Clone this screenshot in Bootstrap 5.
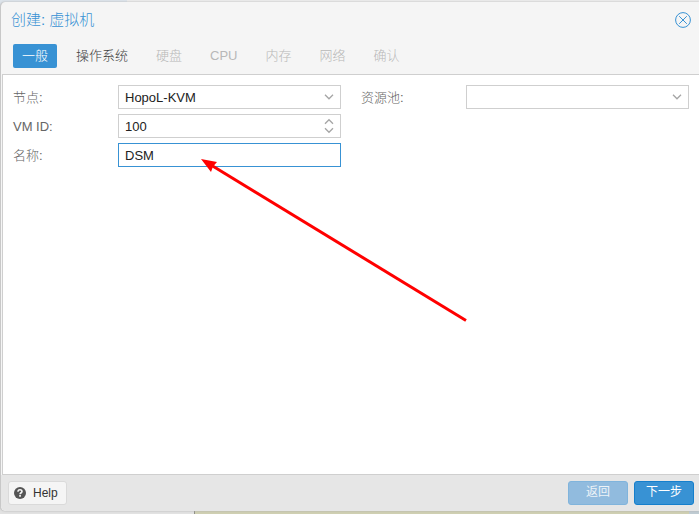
<!DOCTYPE html>
<html lang="zh-CN">
<head>
<meta charset="utf-8">
<meta name="viewport" content="width=device-width, initial-scale=1">
<title>创建: 虚拟机</title>
<link rel="stylesheet" href="https://cdn.jsdelivr.net/npm/bootstrap@5.3.0/dist/css/bootstrap.min.css">
<style>
  body {
    font: 300 13px/17px "Liberation Sans", "Noto Sans CJK SC", sans-serif;
    color: #404040;
    background:
      linear-gradient(90deg, #dde4eb 127px, #ececec 127px) top / 100% 8px no-repeat,
      linear-gradient(90deg, #e2e2e2 194px, #8f8f88 194px 195px, #cfcfb2 195px calc(100% - 10px), #bfcbd2 calc(100% - 10px)) bottom / 100% 8px no-repeat,
      #d5d5d5;
  }
  .backdrop { padding: 2px 0 3px; }
  .wizard { background: #f5f5f5; border-left: 1px solid #c8c8c8; border-radius: 5px 0 0 5px; box-shadow: 0 0 2px #aaa; }
  .wizard-head { padding: 8px 8px 6px 10px; }
  .wizard-title { font-size: 15px; line-height: 20px; font-weight: 300; color: #3892d4; }
  .close-btn { width: 16px; height: 16px; color: #3892d4; }
  .close-btn svg { display: block; }
  .tab-row { gap: 10px; margin-top: 14px; padding-left: 2px; }
  .tab-btn { height: 24px; padding: 0 9px 2px; border-radius: 2px; color: #404040; font-weight: 300; }
  .tab-btn:disabled { color: #b8b8b8; }
  .tab-btn.active { background: #3892d4; color: #fff; }
  .wizard-body { margin-left: 1px; border: 1px solid #cfcfcf; border-right: 0; background: #fff; }
  .form-cols { padding: 10px; gap: 20px; }
  .form-cols > div { flex: 1 1 0; min-width: 0; }
  .field-row + .field-row { margin-top: 5px; }
  .field-row label { width: 105px; flex: none; color: #666; }
  .field-box { display: grid; flex: 1; min-width: 0; height: 24px; border: 1px solid #cfcfcf; background: #fff; }
  .field-box > * { grid-area: 1 / 1; }
  .field-box:focus-within, .field-box.focused { border-color: #3892d4; }
  .field-box select, .field-box input {
    width: 100%; min-width: 0; padding: 2px 26px 0 6px; border: 0; outline: 0; background: transparent;
    appearance: none; color: #222; font-weight: 400; line-height: 20px;
  }
  .field-box input[type=number] { appearance: textfield; }
  .field-box input::-webkit-inner-spin-button { display: none; }
  .field-box svg { place-self: center end; margin-right: 6px; pointer-events: none; }
  .pointer-arrow { left: 198px; top: 84px; pointer-events: none; }
  .wizard-foot { padding: 6px 5px 6px 7px; gap: 6px; background: #e6e6e6; border-radius: 0 0 0 5px; }
  .foot-btn { height: 24px; min-width: 60px; padding: 0 5px 2px; border: 1px solid #157fcc; border-radius: 3px; background: #3892d4; color: #fff; font-size: 12px; }
  .foot-btn:disabled { background: #91bbde; border-color: #80b4dc; color: #edf3f8; }
  .help-btn { min-width: 59px; padding-bottom: 0; gap: 7px; background: #f5f5f5; border-color: #dadada; color: #333; }
</style>
<script src="https://cdn.jsdelivr.net/npm/bootstrap@5.3.0/dist/js/bootstrap.bundle.min.js"></script>
</head>
<body>
<div class="backdrop vh-100 d-flex flex-column">
  <main class="wizard flex-grow-1 d-flex flex-column" role="dialog" aria-labelledby="wizardTitle">
    <header class="wizard-head">
      <div class="d-flex justify-content-between align-items-center">
        <h1 class="wizard-title m-0" id="wizardTitle">创建: 虚拟机</h1>
        <button type="button" class="close-btn border-0 bg-transparent p-0" aria-label="关闭">
          <svg width="16" height="16" viewBox="0 0 16 16" fill="none" stroke="currentColor"><circle cx="8" cy="8" r="7.4"/><path d="M4.2 4.2 11.8 11.8M11.8 4.2 4.2 11.8"/></svg>
        </button>
      </div>
      <nav class="tab-row d-flex">
        <button type="button" class="tab-btn border-0 active">一般</button>
        <button type="button" class="tab-btn border-0 bg-transparent">操作系统</button>
        <button type="button" class="tab-btn border-0 bg-transparent" disabled>硬盘</button>
        <button type="button" class="tab-btn border-0 bg-transparent" disabled>CPU</button>
        <button type="button" class="tab-btn border-0 bg-transparent" disabled>内存</button>
        <button type="button" class="tab-btn border-0 bg-transparent" disabled>网络</button>
        <button type="button" class="tab-btn border-0 bg-transparent" disabled>确认</button>
      </nav>
    </header>

    <section class="wizard-body flex-grow-1 position-relative">
      <form class="form-cols d-flex">
        <div>
          <div class="field-row d-flex align-items-center">
            <label for="node">节点:</label>
            <div class="field-box">
              <select id="node"><option>HopoL-KVM</option></select>
              <svg width="10" height="6" viewBox="0 0 10 6" fill="none" stroke="#a5a5a5" stroke-width="1.3"><path d="M1 .8 5 4.8 9 .8"/></svg>
            </div>
          </div>
          <div class="field-row d-flex align-items-center">
            <label for="vmid">VM ID:</label>
            <div class="field-box">
              <input id="vmid" type="number" value="100">
              <svg width="10" height="16" viewBox="0 0 10 16" fill="none" stroke="#a5a5a5" stroke-width="1.3"><path d="M1 5.7 5 1.7 9 5.7M1 10.3 5 14.3 9 10.3"/></svg>
            </div>
          </div>
          <div class="field-row d-flex align-items-center">
            <label for="vmname">名称:</label>
            <div class="field-box focused"><input id="vmname" type="text" value="DSM"></div>
          </div>
        </div>
        <div>
          <div class="field-row d-flex align-items-center">
            <label for="pool">资源池:</label>
            <div class="field-box">
              <select id="pool"><option></option></select>
              <svg width="10" height="6" viewBox="0 0 10 6" fill="none" stroke="#a5a5a5" stroke-width="1.3"><path d="M1 .8 5 4.8 9 .8"/></svg>
            </div>
          </div>
        </div>
      </form>
      <svg class="pointer-arrow position-absolute" width="268" height="164" viewBox="0 0 268 164" aria-hidden="true">
        <path d="M10 6 265 161.500" fill="none" stroke="#f00" stroke-width="3"/>
        <path d="M0 0 16 3 12 7.500 10 13Z" fill="#f00"/>
      </svg>
    </section>

    <footer class="wizard-foot d-flex align-items-center">
      <button type="button" class="foot-btn help-btn d-flex align-items-center me-auto">
        <svg width="12" height="12" viewBox="0 0 12 12" aria-hidden="true"><circle cx="6" cy="6" r="6" fill="#555"/><path d="M4 4.700C4 3.300 4.900 2.800 6 2.800S8 3.400 8 4.500C8 5.800 6.100 5.700 6.100 7.300" fill="none" stroke="#f5f5f5" stroke-width="1.600"/><path d="M5.200 8.100h1.700v1.600H5.200z" fill="#f5f5f5"/></svg>
        Help
      </button>
      <button type="button" class="foot-btn" disabled>返回</button>
      <button type="button" class="foot-btn">下一步</button>
    </footer>
  </main>
</div>
</body>
</html>
